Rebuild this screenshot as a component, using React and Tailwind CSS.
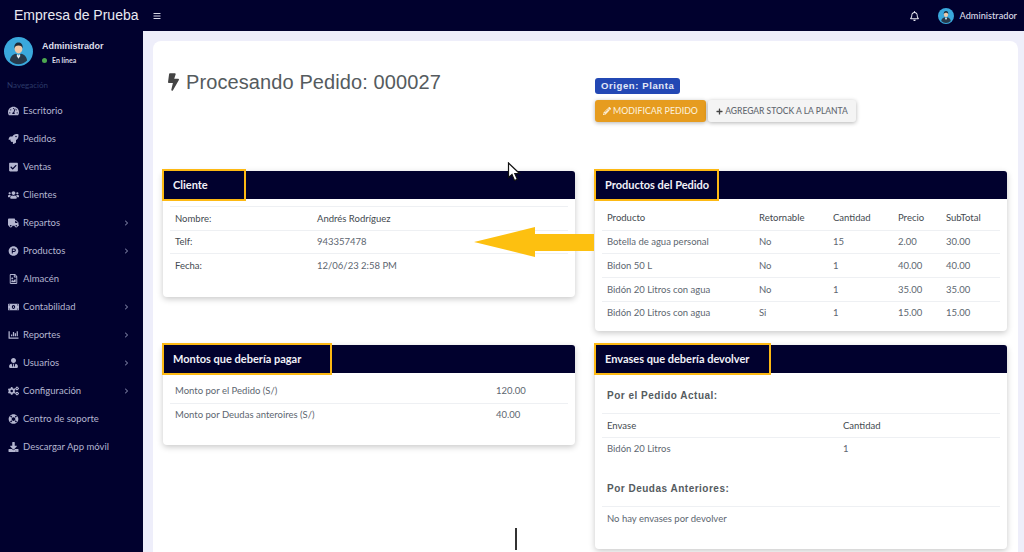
import React from "react";
import {
  FaTachometerAlt, FaRocket, FaCheckSquare, FaUsers, FaTruck, FaProductHunt, FaRegFileImage,
  FaMoneyBillAlt, FaChartBar, FaUserTie, FaCogs, FaLifeRing, FaDownload, FaBolt, FaPencilAlt,
  FaPlus, FaRegBell, FaBars, FaChevronRight,
} from "react-icons/fa";

const nav = [
  [FaTachometerAlt, "Escritorio"],
  [FaRocket, "Pedidos"],
  [FaCheckSquare, "Ventas"],
  [FaUsers, "Clientes"],
  [FaTruck, "Repartos", true],
  [FaProductHunt, "Productos", true],
  [FaRegFileImage, "Almacén"],
  [FaMoneyBillAlt, "Contabilidad", true],
  [FaChartBar, "Reportes", true],
  [FaUserTie, "Usuarios", true],
  [FaCogs, "Configuración", true],
  [FaLifeRing, "Centro de soporte"],
  [FaDownload, "Descargar App móvil"],
];

function Avatar({ size }) {
  return (
    <svg width={size} height={size} viewBox="0 0 32 32" className="shrink-0">
      <circle cx="16" cy="16" r="16" fill="#3aa8dc" />
      <path d="M6.5 26c.5-5 3.5-6.5 6.5-7.5l3 2 3-2c3 1 6 2.500 6.500 7.500-2.500 2.500-6 4-9.500 4s-7-1.500-9.500-4z" fill="#27394a" />
      <path d="M14.500 19l1.500 1.500 1.500-1.500 .5 2-2 3-2-3z" fill="#e8eef2" />
      <ellipse cx="16" cy="13" rx="4.300" ry="5.200" fill="#f0c9a8" />
      <path d="M11.500 13c-.8-5 2-7 4.500-7s5.300 2 4.500 7c-.5-2.500-1.500-3.500-4.500-3.500s-4 1-4.500 3.500z" fill="#1e2a36" />
    </svg>
  );
}

function Card({ title, titleW, children, className = "" }) {
  return (
    <section className={`bg-white rounded-[4px] shadow-[0_2px_6px_rgba(0,0,0,0.22)] flex flex-col ${className}`}>
      <div className="h-[28px] bg-[#01012e] rounded-t-[3px] flex items-stretch">
        <div
          className="-my-[2px] -ml-[1px] border-2 border-[#fdb913] pl-[9px] flex items-center text-[11px] font-bold text-[#f1f1f8] bg-[#01012e] whitespace-nowrap"
          style={{ width: titleW }}
        >
          {title}
        </div>
      </div>
      <div className="px-[7px] flex-1 flex flex-col">{children}</div>
    </section>
  );
}

function Row({ cols, top = true, head = false }) {
  return (
    <div className={`h-[23.7px] pt-[1px] flex items-center ${top ? "border-t border-[#eef0f3]" : ""} ${head ? "text-[#444a50]" : "text-[#5d6670]"}`}>
      {cols.map(([text, w], i) => (
        <div key={i} className="pl-[5px] whitespace-nowrap" style={{ width: w }}>{text}</div>
      ))}
    </div>
  );
}

const pw = [152, 74, 65, 48, 59];

export default function App() {
  return (
    <div className="relative h-[552px] w-[1024px] overflow-hidden bg-[#eeeefa] text-[9.5px] font-['Lato','Noto_Sans',sans-serif] flex flex-col">
      <header className="h-[31px] bg-[#01012e] flex items-center shrink-0">
        <div className="w-[143px] pl-[14px] text-[14px] text-[#e9e9f2] font-['Liberation_Sans',sans-serif] whitespace-nowrap">Empresa de Prueba</div>
        <FaBars className="ml-[10px] text-[#d8d8e6] w-[8px] h-[8px]" />
        <div className="ml-auto flex items-center pr-[7px]">
          <FaRegBell className="text-[#e6e6f0] w-[9px] h-[10px] mr-[19px]" />
          <Avatar size={16} />
          <span className="ml-[6px] text-[9.2px] text-[#dcdcea] font-medium">Administrador</span>
        </div>
      </header>

      <div className="flex flex-1 min-h-0">
        <aside className="w-[143px] shrink-0 bg-[#01012e] flex flex-col">
          <div className="flex items-center pl-[4px] pt-[4px] h-[36px]">
            <Avatar size={29} />
            <div className="ml-[9px] mt-[3px]">
              <div className="text-[9px] font-bold text-[#dedeea] font-['Liberation_Sans',sans-serif] leading-[12px]">Administrador</div>
              <div className="flex items-center mt-[3px] leading-[10px]">
                <span className="w-[5px] h-[5px] rounded-full bg-[#4ca84f] mr-[5px]" />
                <span className="text-[7px] font-bold text-[#d9d9e6]">En línea</span>
              </div>
            </div>
          </div>
          <div className="pl-[7px] mt-[12px] h-[12px] leading-[12px] text-[8px] text-[#2b3a68]">Navegación</div>
          <nav className="mt-[6px] flex flex-col">
            {nav.map(([Icon, label, chev]) => (
              <div key={label} className="h-[28px] flex items-center text-[9.5px] text-[#b4b6d0]">
                <span className="w-[23px] pl-[8px] shrink-0"><Icon className="w-[11px] h-[10px] text-[#b4b6d0]" /></span>
                <span className="whitespace-nowrap">{label}</span>
                {chev && <FaChevronRight className="ml-auto mr-[14px] w-[5px] h-[6px] text-[#6f7296]" />}
              </div>
            ))}
          </nav>
        </aside>

        <main className="flex-1 min-w-0 pl-[10px] pr-[6px] pt-[10px]">
          <div className="bg-white rounded-t-[8px] h-full pl-[10px] pr-[11px]">
            <div className="h-[130px] flex">
              <div className="w-[432px] pt-[28px] pl-[5px] flex items-start">
                <FaBolt className="w-[11px] h-[18px] mt-[4px] text-[#444] " />
                <h1 className="ml-[7px] text-[20px] leading-[26px] tracking-[0.1px] text-[#555b5e] font-['Liberation_Sans',sans-serif] whitespace-nowrap">Procesando Pedido: 000027</h1>
              </div>
              <div className="pt-[37px]">
                <span className="block w-fit h-[16px] leading-[16px] px-[6px] rounded-[3px] bg-[#2348b4] text-[#e4e8f7] text-[9.5px] font-bold tracking-[0.6px] font-['Liberation_Sans',sans-serif]">Origen: Planta</span>
                <div className="flex mt-[6px] gap-[2px]">
                  <button className="h-[22px] w-[111px] rounded-[3px] bg-[#e69c1f] text-[#fbeed6] text-[8.8px] font-medium flex items-center justify-center shadow-[0_1px_4px_rgba(0,0,0,0.3)]">
                    <FaPencilAlt className="w-[8px] h-[8px] mr-[2px]" />MODIFICAR PEDIDO
                  </button>
                  <button className="h-[22px] w-[148px] rounded-[3px] bg-[#f4f4f4] text-[#626870] text-[8.5px] font-medium flex items-center justify-center shadow-[0_1px_4px_rgba(0,0,0,0.3)]">
                    <FaPlus className="w-[7px] h-[7px] mr-[2px] text-[#444]" />AGREGAR STOCK A LA PLANTA
                  </button>
                </div>
              </div>
            </div>

            <div className="grid grid-cols-[412px_412px] gap-x-[20px]">
              <div className="flex flex-col">
                <Card title="Cliente" titleW={84} className="h-[126px]">
                  <div className="mt-[7px]">
                    <Row head cols={[["Nombre:", 142], ["Andrés Rodríguez", 250]]} />
                    <Row head cols={[["Telf:", 142], [<span className="text-[#5d6670]">943357478</span>, 250]]} />
                    <Row head cols={[["Fecha:", 142], [<span className="text-[#5d6670]">12/06/23 2:58 PM</span>, 250]]} />
                  </div>
                </Card>
                <Card title="Montos que debería pagar" titleW={170} className="h-[100px] mt-[48px]">
                  <div className="mt-[6px]">
                    <Row top={false} cols={[["Monto por el Pedido (S/)", 321], ["120.00", 70]]} />
                    <Row cols={[["Monto por Deudas anteroires (S/)", 321], ["40.00", 70]]} />
                  </div>
                </Card>
              </div>
              <div className="flex flex-col">
                <Card title="Productos del Pedido" titleW={125} className="h-[160px]">
                  <div className="mt-[7px]">
                    <Row top={false} head cols={["Producto", "Retornable", "Cantidad", "Precio", "SubTotal"].map((t, i) => [t, pw[i]])} />
                    {[
                      ["Botella de agua personal", "No", "15", "2.00", "30.00"],
                      ["Bidon 50 L", "No", "1", "40.00", "40.00"],
                      ["Bidón 20 Litros con agua", "No", "1", "35.00", "35.00"],
                      ["Bidón 20 Litros con agua", "Si", "1", "15.00", "15.00"],
                    ].map((r, k) => <Row key={k} cols={r.map((t, i) => [t, pw[i]])} />)}
                  </div>
                </Card>
                <Card title="Envases que debería devolver" titleW={177} className="h-[204px] mt-[14px]">
                  <div className="pl-[5px] mt-[15px] h-[16px] leading-[16px] text-[10px] font-bold tracking-[0.5px] text-[#555b60] font-['Liberation_Sans',sans-serif]">Por el Pedido Actual:</div>
                  <div className="mt-[9px]">
                    <Row head cols={[["Envase", 236], ["Cantidad", 160]]} />
                    <Row cols={[["Bidón 20 Litros", 236], ["1", 160]]} />
                  </div>
                  <div className="pl-[5px] mt-[21px] h-[16px] leading-[16px] text-[10px] font-bold tracking-[0.5px] text-[#555b60] font-['Liberation_Sans',sans-serif]">Por Deudas Anteriores:</div>
                  <div className="mt-[9px]">
                    <Row cols={[["No hay envases por devolver", 390]]} />
                  </div>
                </Card>
              </div>
            </div>
          </div>
        </main>
      </div>

      {/* annotation arrow, mouse pointer and text caret lying over the page */}
      <svg className="absolute left-[473px] top-[226px]" width="122" height="33" viewBox="0 0 122 33">
        <polygon points="1,16 62,1 62,8 121,8 121,25 62,25 62,31" fill="#fdc010" />
      </svg>
      <svg className="absolute left-[507px] top-[162px]" width="14" height="20" viewBox="0 0 14 20">
        <path d="M1.500 1v14.500l3.500-3 2.500 6 2.800-1.200-2.500-5.800h4.700z" fill="#fff" stroke="#111" strokeWidth="1.200" />
      </svg>
      <div className="absolute left-[515px] top-[528px] w-[2px] h-[22px] bg-[#333]" />
    </div>
  );
}
